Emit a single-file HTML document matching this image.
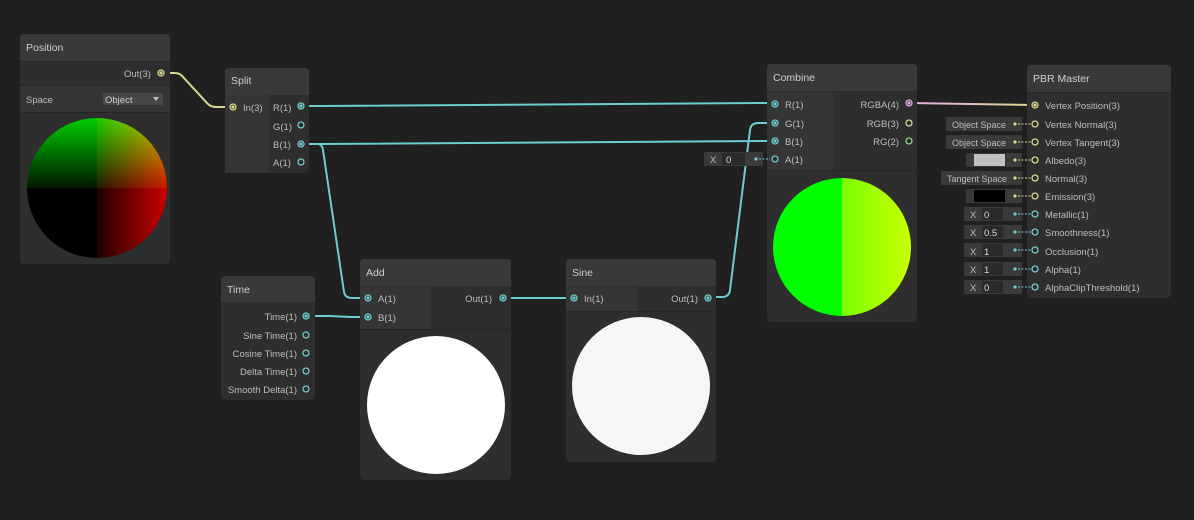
<!DOCTYPE html>
<html><head><meta charset="utf-8"><style>
html,body{margin:0;padding:0;background:#202020;}
svg{display:block;}
text{font-family:"Liberation Sans",sans-serif;font-size:9.5px;fill:#bdbdbd;}
.h{font-size:10.5px;fill:#cfcfcf;}
.f{font-size:9px;}
</style></head><body>
<svg width="1194" height="520" viewBox="0 0 1194 520" xmlns="http://www.w3.org/2000/svg">
<defs>
<clipPath id="c1"><circle cx="97" cy="188" r="70"/></clipPath>
<clipPath id="c2"><circle cx="842" cy="247" r="69"/></clipPath>
<linearGradient id="gv" x1="0" y1="0" x2="0" y2="1"><stop offset="0" stop-color="#00cc00"/><stop offset="1" stop-color="#001800"/></linearGradient>
<linearGradient id="gh" x1="0" y1="0" x2="1" y2="0"><stop offset="0" stop-color="#200000"/><stop offset="1" stop-color="#cc0000"/></linearGradient>
<linearGradient id="gc" x1="0" y1="0" x2="1" y2="0"><stop offset="0" stop-color="#7cff00"/><stop offset="1" stop-color="#c8ff00"/></linearGradient>
<linearGradient id="gp" x1="0" y1="0" x2="1" y2="0"><stop offset="0" stop-color="#e8a8e8"/><stop offset="1" stop-color="#d8d88c"/></linearGradient>
</defs>
<rect width="1194" height="520" fill="#202020"/>

<g fill="none" stroke-width="2">
<path d="M161 73 L175 73 Q180 73 183 77 L208 104 Q211 107 216 107 L233 107" stroke="#d8d88c"/>
<g stroke="#6ccdd2">
<path d="M301 106 L320 106 L760 103 L775 103"/>
<path d="M301 144 L322 144 L760 141 L775 141"/>
<path d="M301 144 L318 144 Q322 144 323 150 L344 292 Q345 298 352 298 L368 298"/>
<path d="M306 316 L330 316 L350 317 L368 317"/>
<path d="M503 298 L574 298"/>
<path d="M708 297 L722 297 Q729 297 730 290 L750 130 Q751 123 758 123 L775 123"/>
</g>
<path d="M909 103 L1035 105" stroke="url(#gp)"/>
</g>

<rect x="20" y="34" width="150" height="230" rx="4" fill="#2e2e2e"/>
<path d="M20 61 V38 Q20 34 24 34 H166 Q170 34 170 38 V61 Z" fill="#393939"/>
<rect x="20" y="61" width="150" height="1" fill="#252525"/>
<rect x="20" y="86" width="150" height="26" fill="#353535"/>
<rect x="20" y="85" width="150" height="1" fill="#252525"/>
<rect x="20" y="112" width="150" height="1" fill="#252525"/>
<text class="h" x="26" y="51">Position</text>
<text x="124" y="77">Out(3)</text>
<text x="26" y="103">Space</text>
<rect x="103" y="93" width="60" height="12" fill="#474747" rx="1"/>
<text x="105" y="103" style="fill:#d0d0d0">Object</text>
<path d="M153 97 L159 97 L156 101 Z" fill="#c0c0c0"/>
<g clip-path="url(#c1)">
<rect x="27" y="118" width="140" height="140" fill="#000"/>
<rect x="27" y="118" width="140" height="70" fill="url(#gv)"/>
<rect x="97" y="118" width="70" height="140" fill="url(#gh)" style="mix-blend-mode:screen"/>
</g>

<rect x="225" y="68" width="84" height="105" rx="4" fill="#2e2e2e"/>
<path d="M225 95 V72 Q225 68 229 68 H305 Q309 68 309 72 V95 Z" fill="#393939"/>
<rect x="225" y="95" width="44" height="78" fill="#353535"/>
<text class="h" x="231" y="84">Split</text>
<text x="243" y="111">In(3)</text>
<text x="273" y="111">R(1)</text>
<text x="273" y="130">G(1)</text>
<text x="273" y="148">B(1)</text>
<text x="273" y="166">A(1)</text>

<rect x="221" y="276" width="94" height="124" rx="4" fill="#2e2e2e"/>
<path d="M221 302 V280 Q221 276 225 276 H311 Q315 276 315 280 V302 Z" fill="#393939"/>
<text class="h" x="227" y="293">Time</text>
<text x="297" y="320" text-anchor="end">Time(1)</text>
<text x="297" y="339" text-anchor="end">Sine Time(1)</text>
<text x="297" y="357" text-anchor="end">Cosine Time(1)</text>
<text x="297" y="375" text-anchor="end">Delta Time(1)</text>
<text x="297" y="393" text-anchor="end">Smooth Delta(1)</text>

<rect x="360" y="259" width="151" height="221" rx="4" fill="#2e2e2e"/>
<path d="M360 286 V263 Q360 259 364 259 H507 Q511 259 511 263 V286 Z" fill="#393939"/>
<rect x="360" y="287" width="71" height="42" fill="#353535"/>
<rect x="360" y="329" width="151" height="1" fill="#252525"/>
<text class="h" x="366" y="276">Add</text>
<text x="378" y="302">A(1)</text>
<text x="378" y="321">B(1)</text>
<text x="492" y="302" text-anchor="end">Out(1)</text>
<circle cx="436" cy="405" r="69" fill="#ffffff"/>

<rect x="566" y="259" width="150" height="203" rx="4" fill="#2e2e2e"/>
<path d="M566 286 V263 Q566 259 570 259 H712 Q716 259 716 263 V286 Z" fill="#393939"/>
<rect x="566" y="287" width="71" height="24" fill="#353535"/>
<rect x="566" y="311" width="150" height="1" fill="#252525"/>
<text class="h" x="572" y="276">Sine</text>
<text x="584" y="302">In(1)</text>
<text x="698" y="302" text-anchor="end">Out(1)</text>
<circle cx="641" cy="386" r="69" fill="#f6f6f6"/>

<rect x="767" y="64" width="150" height="258" rx="4" fill="#2e2e2e"/>
<path d="M767 91 V68 Q767 64 771 64 H913 Q917 64 917 68 V91 Z" fill="#393939"/>
<rect x="767" y="92" width="66" height="78" fill="#353535"/>
<rect x="767" y="170" width="150" height="1" fill="#252525"/>
<text class="h" x="773" y="81">Combine</text>
<text x="785" y="108">R(1)</text>
<text x="785" y="127">G(1)</text>
<text x="785" y="145">B(1)</text>
<text x="785" y="163">A(1)</text>
<text x="899" y="108" text-anchor="end">RGBA(4)</text>
<text x="899" y="127" text-anchor="end">RGB(3)</text>
<text x="899" y="145" text-anchor="end">RG(2)</text>
<g clip-path="url(#c2)">
<rect x="773" y="178" width="69" height="138" fill="#00ff00"/>
<rect x="842" y="178" width="69" height="138" fill="url(#gc)"/>
</g>
<rect x="704" y="152" width="59" height="14" fill="#3a3a3a" rx="1"/>
<text x="710" y="163">X</text>
<rect x="722" y="153" width="23" height="12" fill="#2a2a2a"/>
<text x="726" y="163" style="fill:#d8d8d8">0</text>
<circle cx="756" cy="159" r="1.6" fill="#6ccdd2"/>
<path d="M759 159 H770" stroke="#6ccdd2" stroke-dasharray="2 1.5" stroke-width="1"/>

<rect x="1027" y="65" width="144" height="233" rx="4" fill="#2e2e2e"/>
<path d="M1027 92 V69 Q1027 65 1031 65 H1167 Q1171 65 1171 69 V92 Z" fill="#393939"/>
<rect x="1027" y="92" width="144" height="1" fill="#252525"/>
<text class="h" x="1033" y="82">PBR Master</text>
<g>
<text x="1045" y="109">Vertex Position(3)</text>
<text x="1045" y="128">Vertex Normal(3)</text>
<text x="1045" y="146">Vertex Tangent(3)</text>
<text x="1045" y="164">Albedo(3)</text>
<text x="1045" y="182">Normal(3)</text>
<text x="1045" y="200">Emission(3)</text>
<text x="1045" y="218">Metallic(1)</text>
<text x="1045" y="236">Smoothness(1)</text>
<text x="1045" y="255">Occlusion(1)</text>
<text x="1045" y="273">Alpha(1)</text>
<text x="1045" y="291">AlphaClipThreshold(1)</text>
</g>
<g>
<rect x="946" y="117" width="76" height="14" fill="#3a3a3a" rx="1"/><text class="f" x="952" y="128">Object Space</text>
<rect x="946" y="135" width="76" height="14" fill="#3a3a3a" rx="1"/><text class="f" x="952" y="146">Object Space</text>
<rect x="966" y="153" width="56" height="14" fill="#3a3a3a" rx="1"/><rect x="974" y="154" width="31" height="12" fill="#c0c0c0"/>
<rect x="941" y="171" width="81" height="14" fill="#3a3a3a" rx="1"/><text class="f" x="947" y="182">Tangent Space</text>
<rect x="966" y="189" width="56" height="14" fill="#3a3a3a" rx="1"/><rect x="974" y="190" width="31" height="12" fill="#000"/>
<rect x="964" y="207" width="58" height="14" fill="#3a3a3a" rx="1"/><text x="970" y="218">X</text><rect x="982" y="208" width="21" height="12" fill="#2a2a2a"/><text x="984" y="218" style="fill:#d8d8d8">0</text>
<rect x="964" y="225" width="58" height="14" fill="#3a3a3a" rx="1"/><text x="970" y="236">X</text><rect x="982" y="226" width="21" height="12" fill="#2a2a2a"/><text x="984" y="236" style="fill:#d8d8d8">0.5</text>
<rect x="964" y="243" width="58" height="14" fill="#3a3a3a" rx="1"/><text x="970" y="255">X</text><rect x="982" y="244" width="21" height="12" fill="#2a2a2a"/><text x="984" y="255" style="fill:#d8d8d8">1</text>
<rect x="964" y="262" width="58" height="14" fill="#3a3a3a" rx="1"/><text x="970" y="273">X</text><rect x="982" y="263" width="21" height="12" fill="#2a2a2a"/><text x="984" y="273" style="fill:#d8d8d8">1</text>
<rect x="964" y="280" width="58" height="14" fill="#3a3a3a" rx="1"/><text x="970" y="291">X</text><rect x="982" y="281" width="21" height="12" fill="#2a2a2a"/><text x="984" y="291" style="fill:#d8d8d8">0</text>
</g>
<g stroke-width="1" stroke-dasharray="2 1.5">
<path d="M1018 124 H1032 M1018 142 H1032 M1018 160 H1032 M1018 178 H1032 M1018 196 H1032" stroke="#d8d88c"/>
<path d="M1018 214 H1032 M1018 232 H1032 M1018 250 H1032 M1018 269 H1032 M1018 287 H1032" stroke="#6ccdd2"/>
</g>
<g fill="#d8d88c"><circle cx="1015" cy="124" r="1.6"/><circle cx="1015" cy="142" r="1.6"/><circle cx="1015" cy="160" r="1.6"/><circle cx="1015" cy="178" r="1.6"/><circle cx="1015" cy="196" r="1.6"/></g>
<g fill="#6ccdd2"><circle cx="1015" cy="214" r="1.6"/><circle cx="1015" cy="232" r="1.6"/><circle cx="1015" cy="250" r="1.6"/><circle cx="1015" cy="269" r="1.6"/><circle cx="1015" cy="287" r="1.6"/></g>

<g fill="#2e2e2e" stroke-width="1.3">
<g stroke="#d8d88c">
<circle cx="161" cy="73" r="3"/><circle cx="233" cy="107" r="3"/>
<circle cx="909" cy="123" r="3"/>
<circle cx="1035" cy="105" r="3"/><circle cx="1035" cy="124" r="3"/><circle cx="1035" cy="142" r="3"/><circle cx="1035" cy="160" r="3"/><circle cx="1035" cy="178" r="3"/><circle cx="1035" cy="196" r="3"/>
</g>
<circle cx="909" cy="141" r="3" stroke="#8cd88c"/>
<circle cx="909" cy="103" r="3" stroke="#e0a8e0"/>
<g stroke="#6ccdd2">
<circle cx="301" cy="106" r="3"/><circle cx="301" cy="125" r="3"/><circle cx="301" cy="144" r="3"/><circle cx="301" cy="162" r="3"/>
<circle cx="306" cy="316" r="3"/><circle cx="306" cy="335" r="3"/><circle cx="306" cy="353" r="3"/><circle cx="306" cy="371" r="3"/><circle cx="306" cy="389" r="3"/>
<circle cx="368" cy="298" r="3"/><circle cx="368" cy="317" r="3"/><circle cx="503" cy="298" r="3"/>
<circle cx="574" cy="298" r="3"/><circle cx="708" cy="298" r="3"/>
<circle cx="775" cy="104" r="3"/><circle cx="775" cy="123" r="3"/><circle cx="775" cy="141" r="3"/><circle cx="775" cy="159" r="3"/>
<circle cx="1035" cy="214" r="3"/><circle cx="1035" cy="232" r="3"/><circle cx="1035" cy="250" r="3"/><circle cx="1035" cy="269" r="3"/><circle cx="1035" cy="287" r="3"/>
</g>
</g>
<g fill="#d8d88c"><circle cx="161" cy="73" r="1.6"/><circle cx="233" cy="107" r="1.6"/><circle cx="1035" cy="105" r="1.6"/></g>
<circle cx="909" cy="103" r="1.6" fill="#e0a8e0"/>
<g fill="#6ccdd2"><circle cx="301" cy="106" r="1.6"/><circle cx="301" cy="144" r="1.6"/><circle cx="306" cy="316" r="1.6"/><circle cx="368" cy="298" r="1.6"/><circle cx="368" cy="317" r="1.6"/><circle cx="503" cy="298" r="1.6"/><circle cx="574" cy="298" r="1.6"/><circle cx="708" cy="298" r="1.6"/><circle cx="775" cy="104" r="1.6"/><circle cx="775" cy="123" r="1.6"/><circle cx="775" cy="141" r="1.6"/></g>
</svg>
</body></html>
